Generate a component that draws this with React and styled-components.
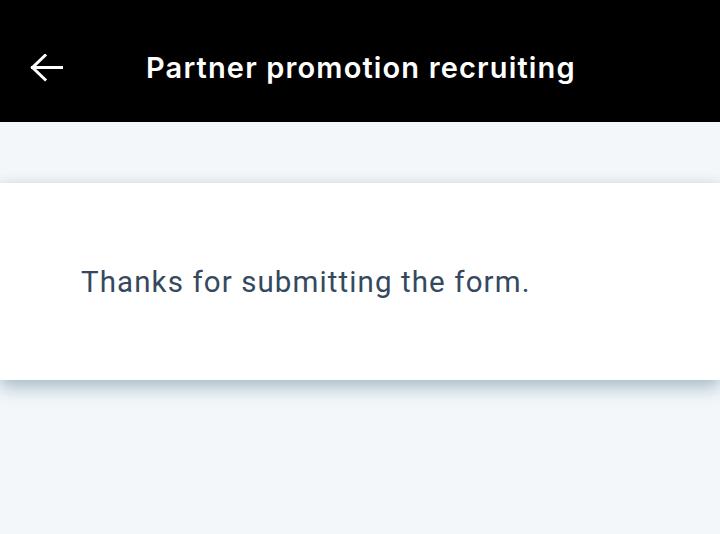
import React from "react";
import styled, { createGlobalStyle } from "styled-components";

const Global = createGlobalStyle`
  html, body { margin: 0; padding: 0; background: #f3f7fa; }
  body { font-family: Roboto, "Liberation Sans", sans-serif; }
`;

const Page = styled.div`
  width: 720px;
  height: 534px;
  background: #f3f7fa;
  display: flex;
  flex-direction: column;
  overflow: hidden;
`;

const Header = styled.header`
  height: 122px;
  box-sizing: border-box;
  padding: 13px 0 0 30px;
  background: #000;
  display: flex;
  align-items: center;
  flex-shrink: 0;
`;

const BackButton = styled.button`
  background: none;
  border: none;
  padding: 0;
  margin: 0;
  width: 34px;
  height: 28px;
  display: flex;
  align-items: center;
  cursor: pointer;
`;

const Title = styled.h1`
  margin: 0 0 0 82px;
  color: #fff;
  font-family: Inter, "Noto Sans", sans-serif;
  font-weight: 600;
  font-size: 29px;
  letter-spacing: 1.15px;
  line-height: 1;
`;

const Body = styled.main`
  padding-top: 61px;
`;

const Card = styled.section`
  height: 197px;
  background: #fff;
  display: flex;
  align-items: center;
  padding-left: 81px;
  box-shadow: 0 8px 16px rgba(60, 105, 125, 0.38), 0 -2px 10px rgba(60, 105, 125, 0.08);
`;

const Message = styled.p`
  margin: 0;
  color: #34495e;
  font-family: Roboto, "Liberation Sans", sans-serif;
  font-size: 29.5px;
  font-weight: 400;
  letter-spacing: 1.1px;
  line-height: 1;
  margin-top: 2px;
`;

export default function App() {
  return (
    <Page>
      <Global />
      <Header>
        <BackButton aria-label="Back">
          <svg width="33" height="28" viewBox="0 0 33 28" fill="none">
            <path d="M32 13.5H2.5M15 1.5L2.5 13.5L15 25.5" stroke="#fff" strokeWidth="3" strokeLinecap="square" strokeLinejoin="miter" />
          </svg>
        </BackButton>
        <Title>Partner promotion recruiting</Title>
      </Header>
      <Body>
        <Card>
          <Message>Thanks for submitting the form.</Message>
        </Card>
      </Body>
    </Page>
  );
}
